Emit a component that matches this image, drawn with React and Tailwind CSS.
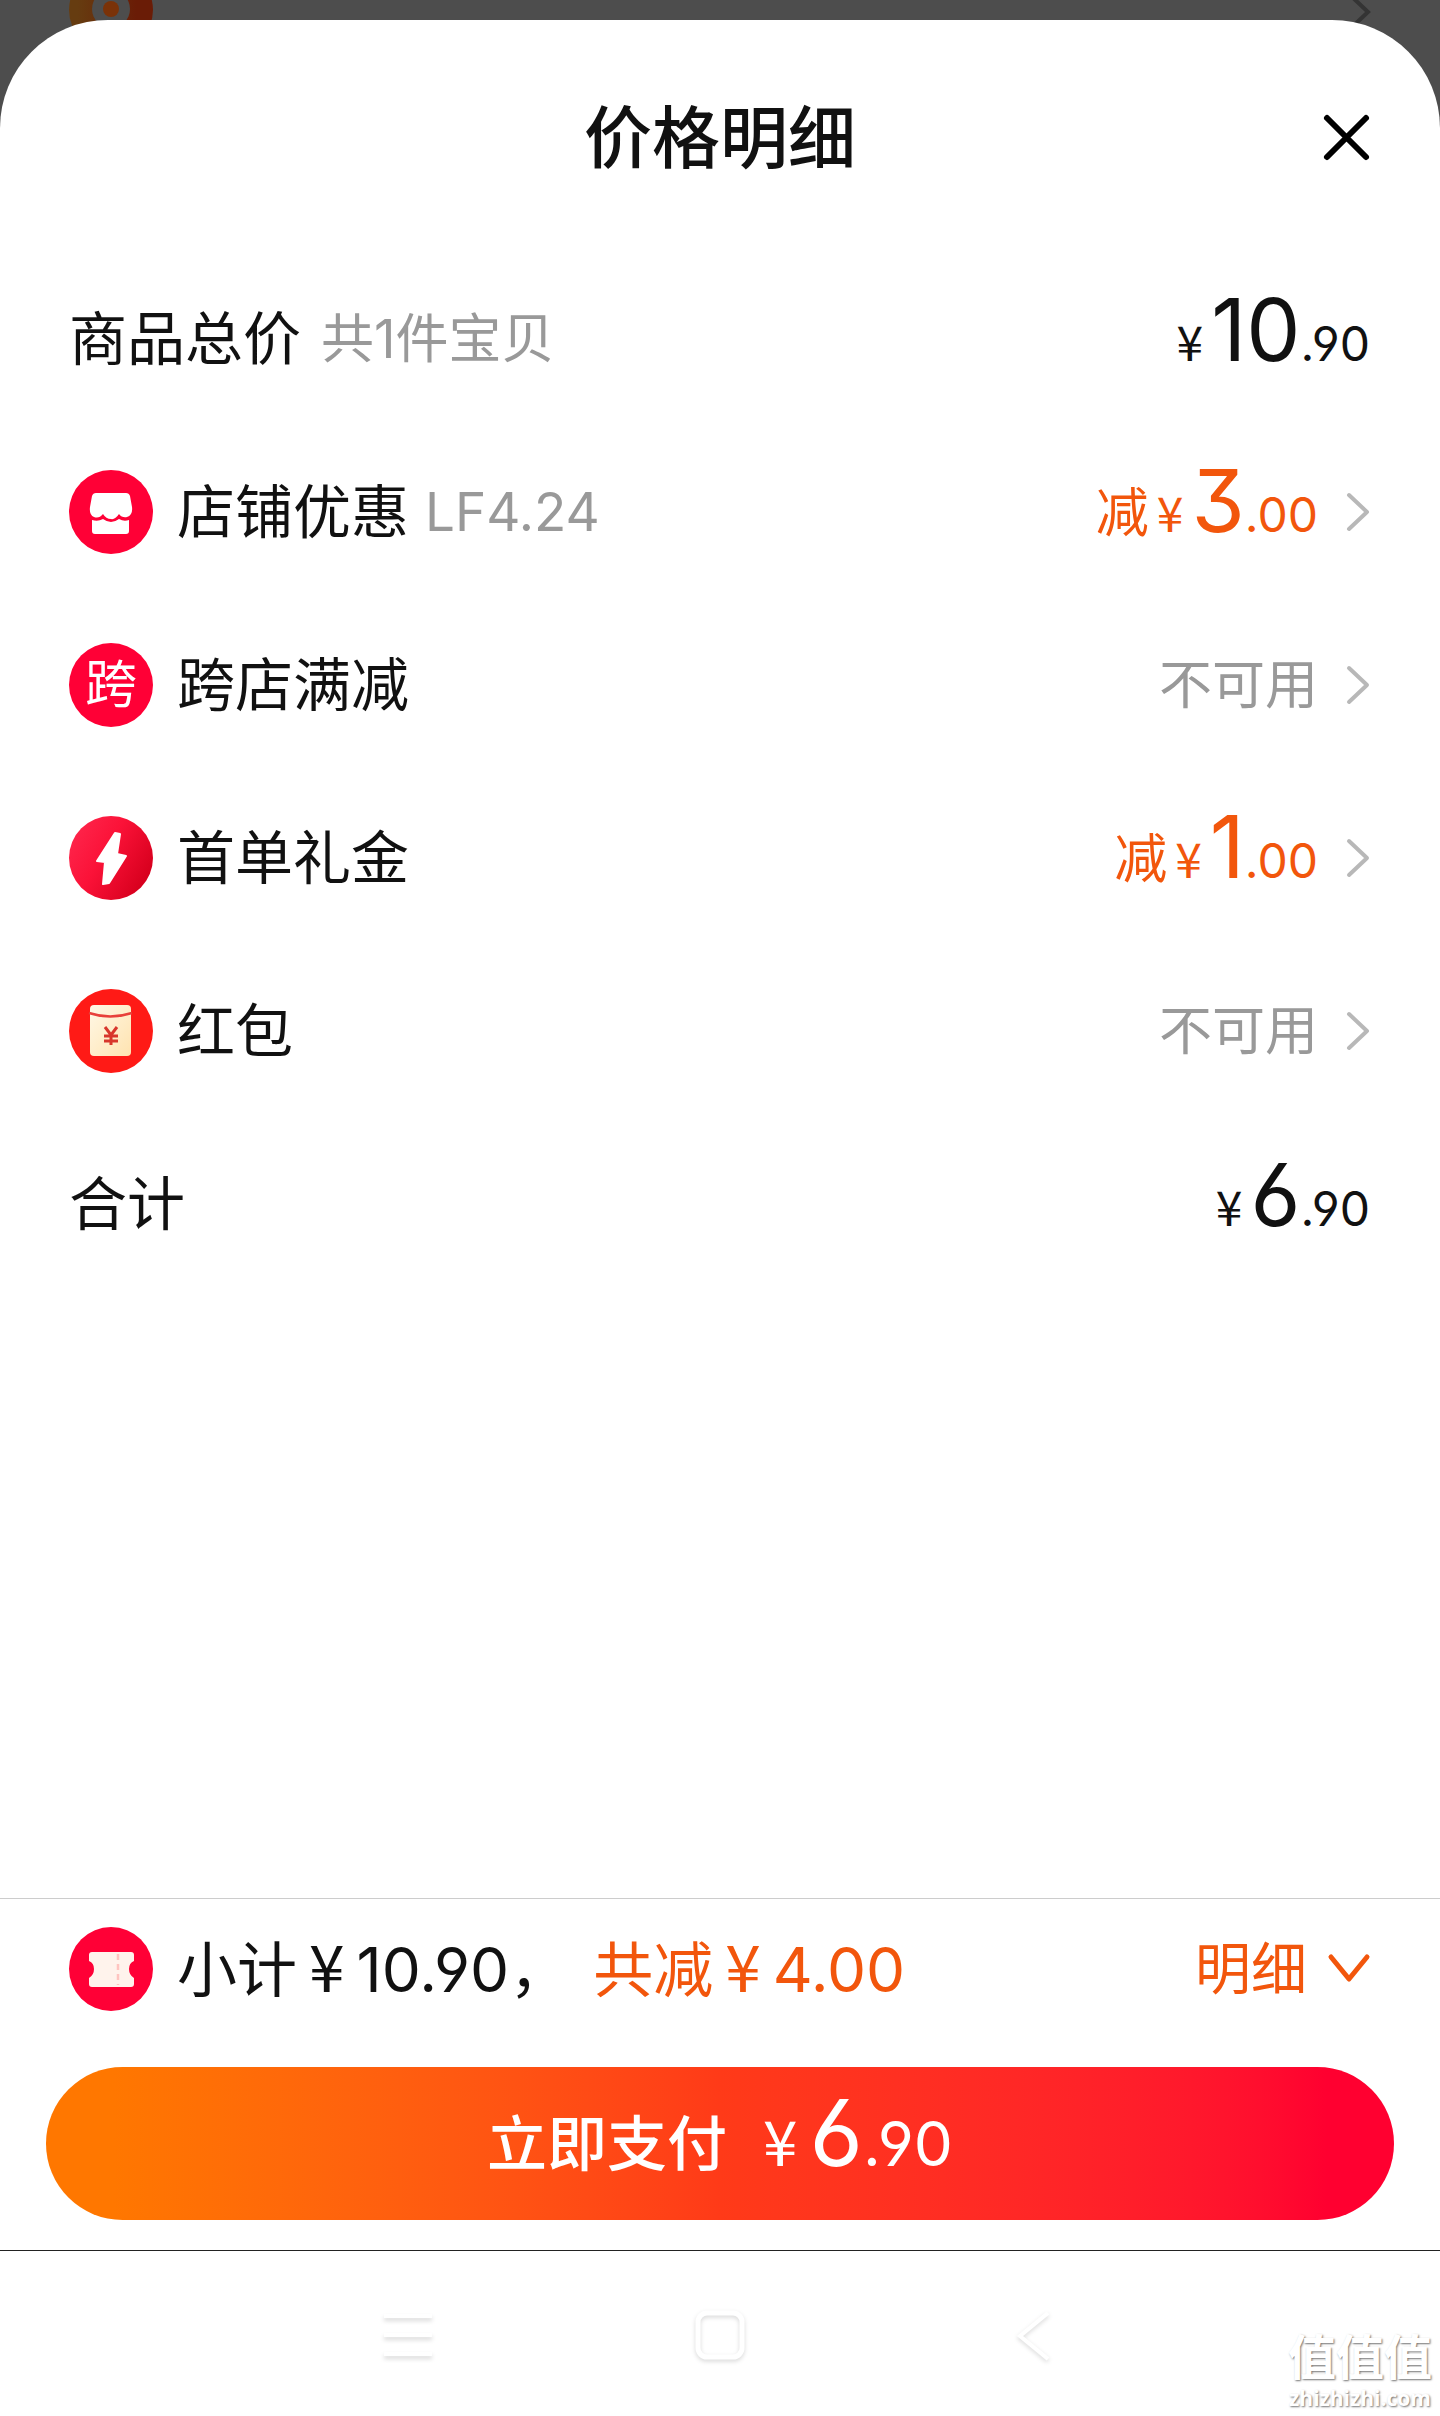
import { useState } from 'react';

const SANS = "font-['Inter','Noto_Sans_CJK_SC',sans-serif] [font-feature-settings:'cv03','cv04','cv09']";

const discounts = [
  { id: 'shop', label: '店铺优惠', note: 'LF4.24', amount: ['3', '00'], icon: <ShopIcon /> },
  { id: 'cross', label: '跨店满减', icon: <CrossIcon /> },
  { id: 'first', label: '首单礼金', amount: ['1', '00'], icon: <BoltIcon /> },
  { id: 'packet', label: '红包', icon: <PacketIcon /> },
];

function ShopIcon() {
  return (
    <svg viewBox="0 0 84 84" className="size-[84px]" aria-hidden="true">
      <circle cx="42" cy="42" r="42" fill="#ff0036" />
      <path d="M27 23H57Q60 23 61 26L63 37Q64 45 58 47Q53 48 50 44Q46 50 42 49Q37 49 34 44Q30 49 25 47Q20 45 21 37L23 26Q24 23 27 23Z" fill="#fff" />
      <path d="M23 50Q29 52 34 49Q42 55 50 49Q55 52 60 50V61Q60 64 57 64H26Q23 64 23 61Z" fill="#fff" />
    </svg>
  );
}

function CrossIcon() {
  return (
    <span className="flex size-[84px] items-center justify-center rounded-full bg-[#ff0036] text-[52px] leading-none text-white">
      跨
    </span>
  );
}

function BoltIcon() {
  return (
    <svg viewBox="0 0 84 84" className="size-[84px]" aria-hidden="true">
      <defs>
        <linearGradient id="bolt" x1="0" y1="0" x2="1" y2="0.6">
          <stop offset="0" stopColor="#ff2a50" />
          <stop offset="0.5" stopColor="#fb1238" />
          <stop offset="1" stopColor="#d8001e" />
        </linearGradient>
      </defs>
      <circle cx="42" cy="42" r="42" fill="url(#bolt)" />
      <path d="M46 17L51 18L48 38L57 40L40 67L34 68L36 46L28 45Z" fill="#fff" stroke="#fff" strokeWidth="2" strokeLinejoin="round" />
    </svg>
  );
}

function PacketIcon() {
  return (
    <svg viewBox="0 0 84 84" className="size-[84px]" aria-hidden="true">
      <defs>
        <linearGradient id="packet" x1="0" y1="0" x2="1" y2="1">
          <stop offset="0" stopColor="#fff8e6" />
          <stop offset="1" stopColor="#ffe3b0" />
        </linearGradient>
      </defs>
      <circle cx="42" cy="42" r="42" fill="#ff1a16" />
      <rect x="21" y="16" width="41" height="51" rx="4" fill="url(#packet)" />
      <path d="M20 24Q41 31 63 24" fill="none" stroke="#e8403a" strokeWidth="2.5" />
      <path d="M36 38L42 46L48 38M42 46V56M35 47H49M35 52H49" fill="none" stroke="#d8362c" strokeWidth="3" />
    </svg>
  );
}

function CouponIcon() {
  return (
    <svg viewBox="0 0 84 84" className="size-[84px]" aria-hidden="true">
      <circle cx="42" cy="42" r="42" fill="#ff0036" />
      <path d="M23 25H62Q65 25 65 28V34Q60 36 60 42Q60 48 65 51V57Q65 60 62 60H23Q20 60 20 57V51Q25 48 25 42Q25 36 20 34V28Q20 25 23 25Z" fill="#fff3ec" />
      <path d="M49 27V58" stroke="#ffc4c0" strokeWidth="2.5" strokeDasharray="6 4" />
    </svg>
  );
}

function Chevron() {
  return (
    <svg viewBox="0 0 24 40" className="h-10 w-6 shrink-0" fill="none" stroke="#b8b8b8" strokeWidth="4" strokeLinecap="round" strokeLinejoin="round" aria-hidden="true">
      <path d="M3 3L21 20L3 37" />
    </svg>
  );
}

function Yuan() {
  return <span className="font-['Noto_Sans_CJK_SC',sans-serif]">¥</span>;
}

function Price({ yuan, cents }) {
  return (
    <span className="flex items-baseline text-[48px] leading-[44px]">
      <Yuan />
      <span className="ml-2 text-[86px]">{yuan}</span>
      <span>.{cents}</span>
    </span>
  );
}

function DiscountRow({ item }) {
  return (
    <li>
      <button type="button" className="flex min-h-[173px] w-full items-center text-left">
        {item.icon}
        <span className="ml-6 flex flex-1 items-center leading-[64px]">
          <span className="text-[58px]">{item.label}</span>
          {item.note && <span className="ml-4 text-[53px] text-[#999]">{item.note}</span>}
        </span>
        {item.amount ? (
          <span className="flex items-baseline gap-2 text-[#f2560c]">
            <span className="text-[53px] leading-[64px]">减</span>
            <Price yuan={item.amount[0]} cents={item.amount[1]} />
          </span>
        ) : (
          <span className="text-[53px] leading-[64px] text-[#999]">不可用</span>
        )}
        <span className="ml-7 flex">
          <Chevron />
        </span>
      </button>
    </li>
  );
}

function NavBar() {
  return (
    <nav className="relative flex h-[165px] items-center justify-between px-[378px] pt-1">
      <button type="button" aria-label="最近任务" className="drop-shadow-[0_3px_2px_rgba(0,0,0,0.15)]">
        <svg viewBox="0 0 60 60" className="size-15" fill="none" stroke="#fff" strokeWidth="4">
          <path d="M6 10H54M6 29H54M6 48H54" />
        </svg>
      </button>
      <button type="button" aria-label="主屏幕" className="drop-shadow-[0_2px_2px_rgba(0,0,0,0.15)]">
        <svg viewBox="0 0 60 60" className="size-15" fill="none" stroke="#fff" strokeWidth="5">
          <rect x="8" y="7" width="44" height="44" rx="9" />
        </svg>
      </button>
      <button type="button" aria-label="返回" className="drop-shadow-[0_2px_2px_rgba(0,0,0,0.15)]">
        <svg viewBox="0 0 60 60" className="size-15" fill="none" stroke="#fff" strokeWidth="4">
          <path d="M46 7L18 30L46 53" />
        </svg>
      </button>
      <div className="absolute right-2 bottom-1 flex flex-col items-center font-bold text-white [text-shadow:1px_1px_2px_rgba(0,0,0,0.55)]">
        <span className="text-[48px] leading-[52px]">值值值</span>
        <span className="font-['Open_Sans',sans-serif] text-[21px] leading-7">zhizhizhi.com</span>
      </div>
    </nav>
  );
}

export default function App() {
  const [open, setOpen] = useState(true);

  return (
    <div className={`relative flex min-h-screen flex-col bg-[#4d4d4d] pt-5 text-[#111] ${SANS}`}>
      {/* Page behind the sheet */}
      <svg viewBox="0 0 84 84" className="absolute -top-8 left-[69px] size-[84px]" aria-hidden="true">
        <defs>
          <linearGradient id="dim" x1="0" x2="1">
            <stop offset="0.1" stopColor="#663c10" />
            <stop offset="0.8" stopColor="#6a1c06" />
          </linearGradient>
        </defs>
        <circle cx="42" cy="42" r="42" fill="url(#dim)" />
        <circle cx="42" cy="41" r="19" fill="#4d4d4d" />
        <circle cx="42" cy="41" r="8" fill="#7a3208" />
      </svg>
      <svg viewBox="0 0 24 40" className="absolute -top-2 right-[69px] h-10 w-6" fill="none" stroke="#343434" strokeWidth="4" aria-hidden="true">
        <path d="M3 3L21 20L3 37" />
      </svg>

      <section className="relative flex flex-1 flex-col rounded-t-[108px] bg-white">
        <header className="relative flex min-h-[232px] items-center justify-center pt-1">
          <h1 className="text-[68px] leading-[80px] font-medium">价格明细</h1>
          <button type="button" aria-label="关闭" onClick={() => setOpen(false)} className="absolute right-[67px]">
            <svg viewBox="0 0 52 52" className="size-[52px]" fill="none" stroke="#000" strokeWidth="6" strokeLinecap="round">
              <path d="M6 6L45 45M45 6L6 45" />
            </svg>
          </button>
        </header>

        <div className="flex-1 pr-[70px] pl-[69px]">
          <div className="flex min-h-[173px] items-center">
            <span className="text-[58px] leading-[64px]">商品总价</span>
            <span className="ml-5 text-[53px] leading-[64px] text-[#999]">共1件宝贝</span>
            <div className="ml-auto pb-1">
              <Price yuan="10" cents="90" />
            </div>
          </div>
          <ul>
            {discounts.map((item) => (
              <DiscountRow key={item.id} item={item} />
            ))}
          </ul>
          <div className="flex min-h-[173px] items-center">
            <span className="text-[58px] leading-[64px]">合计</span>
            <div className="ml-auto pb-1">
              <Price yuan="6" cents="90" />
            </div>
          </div>
        </div>

        <footer>
          <div className="flex min-h-[141px] items-center border-t border-[#ccc] px-[69px]">
            <CouponIcon />
            <p className="ml-6 flex items-baseline pb-1 text-[60px] leading-[64px]">
              <span>小计</span>
              <span className="ml-3 text-[64px]"><Yuan /></span>
              <span className="ml-3 text-[62px]">10.90</span>
              <span>，</span>
              <span className="ml-6 text-[#f2560c]">共减</span>
              <span className="ml-3 text-[64px] text-[#f2560c]"><Yuan /></span>
              <span className="ml-3 text-[62px] text-[#f2560c]">4.00</span>
            </p>
            <button type="button" aria-expanded={open} onClick={() => setOpen(!open)} className="ml-auto flex items-center gap-5 text-[56px] leading-[64px] text-[#f2560c]">
              明细
              <svg viewBox="0 0 44 32" className="h-8 w-11" fill="none" stroke="currentColor" strokeWidth="5" strokeLinecap="round" strokeLinejoin="round" aria-hidden="true">
                <path d="M4 4L22 26L40 4" />
              </svg>
            </button>
          </div>
          <div className="border-b border-[#222] px-[46px] pt-7 pb-[30px]">
            <button type="button" className="flex h-[153px] w-full items-center justify-center rounded-full bg-linear-to-r from-[#ff7700] from-5% via-[#ff3a18] to-[#ff0030] to-95% pb-1 text-white">
              <span className="flex items-baseline text-[60px] leading-[64px]">
                <span className="font-medium">立即支付</span>
                <span className="ml-9 text-[62px]"><Yuan /></span>
                <span className="ml-3 text-[92px] leading-[44px]">6</span>
                <span className="text-[62px]">.90</span>
              </span>
            </button>
          </div>
          <NavBar />
        </footer>
      </section>
    </div>
  );
}
